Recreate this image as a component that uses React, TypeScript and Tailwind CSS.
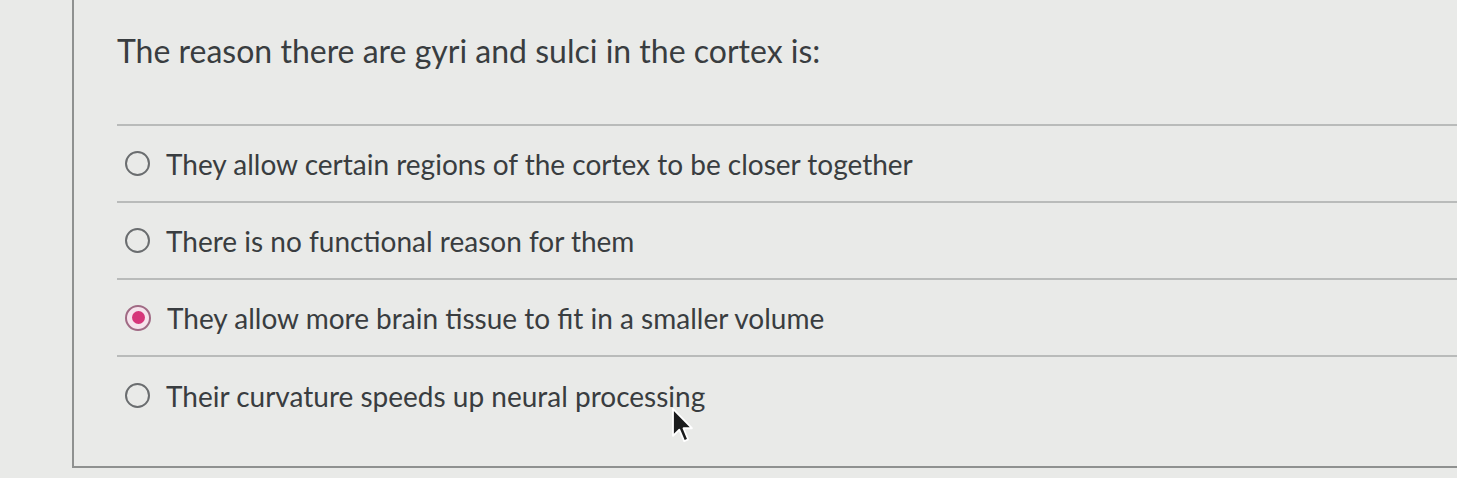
const options = [
  { id: 'a', label: 'They allow certain regions of the cortex to be closer together' },
  { id: 'b', label: 'There is no functional reason for them' },
  { id: 'c', label: 'They allow more brain tissue to fit in a smaller volume' },
  { id: 'd', label: 'Their curvature speeds up neural processing' },
]

function Radio({ checked }: { checked: boolean }) {
  if (checked) {
    return (
      <span className="flex h-[26px] w-[26px] shrink-0 items-center justify-center rounded-full border-2 border-[#a06a84] bg-[#f6e3ec]">
        <span className="h-[13px] w-[13px] rounded-full bg-[#d6367a]" />
      </span>
    )
  }
  return <span className="h-[25px] w-[25px] shrink-0 rounded-full border-2 border-[#6a6d6f]" />
}

function Cursor() {
  return (
    <svg
      className="pointer-events-none absolute left-[671px] top-[407px]"
      width="22"
      height="36"
      viewBox="0 0 12 20"
    >
      <path
        d="M1 1 L1 16 L4.5 12.6 L7.2 19 L9.4 18 L6.8 11.8 L11.5 11.8 Z"
        fill="#1b1c1d"
        stroke="#ffffff"
        strokeWidth="1"
        strokeLinejoin="round"
      />
    </svg>
  )
}

export default function App() {
  const selected = 'c'

  return (
    <div
      className="relative h-[478px] w-[1457px] overflow-hidden bg-[#e9eae8] text-[#393d40]"
      style={{ fontFamily: 'Lato, "Open Sans", sans-serif' }}
    >
      <div className="ml-[72px] h-[468px] border-b-2 border-l-2 border-[#8f9190] pl-[43px] pt-[29px]">
        <h1 className="text-[32px] leading-[44px]">
          The reason there are gyri and sulci in the cortex is:
        </h1>

        <div className="mt-[51px] border-t-2 border-[#b9bbba]">
          {options.map((opt, i) => (
            <label
              key={opt.id}
              className={`flex h-[77px] items-center gap-[16px] pl-[8px] ${
                i < options.length - 1 ? 'border-b-2 border-[#b9bbba]' : ''
              }`}
            >
              <Radio checked={opt.id === selected} />
              <span className="text-[28px] leading-none">{opt.label}</span>
            </label>
          ))}
        </div>
      </div>

      <Cursor />
    </div>
  )
}
